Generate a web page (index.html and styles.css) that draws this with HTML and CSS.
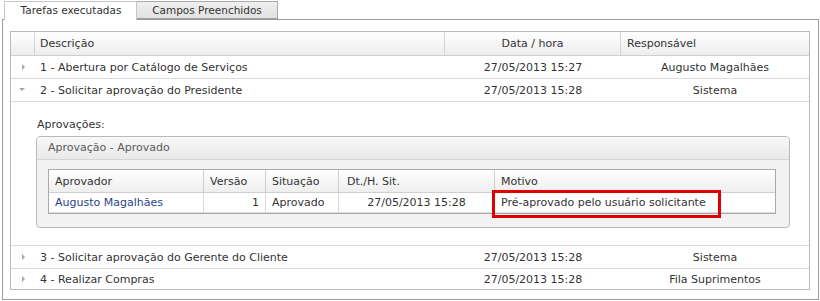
FILE: index.html
```html
<!DOCTYPE html>
<html lang="pt">
<head>
<meta charset="utf-8">
<link rel="stylesheet" href="styles.css">
</head>
<body>
<div class="tabs">
  <div class="tab tab-active">Tarefas executadas</div>
  <div class="tab tab-idle">Campos Preenchidos</div>
</div>
<div class="panel">
  <table class="grid">
    <thead>
      <tr>
        <th class="c-exp"></th>
        <th class="c-desc">Descrição</th>
        <th class="c-date">Data / hora</th>
        <th class="c-resp">Responsável</th>
      </tr>
    </thead>
    <tbody>
      <tr>
        <td class="c-exp"><span class="tri tri-right"></span></td>
        <td class="c-desc">1 - Abertura por Catálogo de Serviços</td>
        <td class="c-date">27/05/2013 15:27</td>
        <td class="c-resp">Augusto Magalhães</td>
      </tr>
      <tr>
        <td class="c-exp"><span class="tri tri-down"></span></td>
        <td class="c-desc">2 - Solicitar aprovação do Presidente</td>
        <td class="c-date">27/05/2013 15:28</td>
        <td class="c-resp">Sistema</td>
      </tr>
      <tr class="detail-row">
        <td colspan="4" class="detail">
          <div class="detail-label">Aprovações:</div>
          <div class="fieldset">
            <div class="fieldset-head">Aprovação - Aprovado</div>
            <div class="fieldset-body">
              <table class="sub">
                <thead>
                  <tr>
                    <th class="s-apr">Aprovador</th>
                    <th class="s-ver">Versão</th>
                    <th class="s-sit">Situação</th>
                    <th class="s-dt">Dt./H. Sit.</th>
                    <th class="s-mot">Motivo</th>
                  </tr>
                </thead>
                <tbody>
                  <tr>
                    <td class="s-apr"><a class="user-link" href="#">Augusto Magalhães</a></td>
                    <td class="s-ver num">1</td>
                    <td class="s-sit">Aprovado</td>
                    <td class="s-dt center">27/05/2013 15:28</td>
                    <td class="s-mot">Pré-aprovado pelo usuário solicitante<span class="highlight"></span></td>
                  </tr>
                </tbody>
              </table>
            </div>
          </div>
        </td>
      </tr>
      <tr>
        <td class="c-exp"><span class="tri tri-right"></span></td>
        <td class="c-desc">3 - Solicitar aprovação do Gerente do Cliente</td>
        <td class="c-date">27/05/2013 15:28</td>
        <td class="c-resp">Sistema</td>
      </tr>
      <tr class="last">
        <td class="c-exp"><span class="tri tri-right"></span></td>
        <td class="c-desc">4 - Realizar Compras</td>
        <td class="c-date">27/05/2013 15:28</td>
        <td class="c-resp">Fila Suprimentos</td>
      </tr>
    </tbody>
  </table>
</div>
</body>
</html>
```
FILE: styles.css
```css
* { box-sizing: border-box; }
html, body { margin: 0; padding: 0; background: #fff; }
body {
  font-family: "DejaVu Sans", Verdana, sans-serif;
  font-size: 11px;
  color: #333;
  width: 820px;
  height: 301px;
  overflow: hidden;
}

.tabs {
  display: flex;
  padding: 1px 0 0 4px;
  height: 19px;
  align-items: flex-start;
}
.tab {
  height: 18px;
  line-height: 17px;
  text-align: center;
  border: 1px solid #b4b4b4;
  border-bottom: none;
  font-size: 10.5px;
  color: #333;
}
.tab-active {
  width: 133px;
  height: 19px;
  background: #fff;
  border-color: #c8c8c8;
  position: relative;
  z-index: 1;
  padding-left: 1px;
}
.tab-idle {
  width: 141px;
  background: linear-gradient(#efefef, #e2e2e2);
  border-color: #a9a9a9;
  border-left: none;
  border-bottom: 1px solid #a0a0a0;
}

.panel {
  margin-left: 2px;
  width: 817px;
  height: 281px;
  border: 1px solid #9c9c9c;
  padding: 11px 8px 0 7px;
}

.grid {
  width: 800px;
  table-layout: fixed;
  border-collapse: separate;
  border-spacing: 0;
  border: 1px solid #b9b9b9;
}
.grid th, .grid td {
  padding: 0;
  white-space: nowrap;
  overflow: hidden;
}
.grid th {
  height: 24px;
  font-weight: normal;
  text-align: left;
  background: linear-gradient(#ffffff, #ededed);
  border-bottom: 1px solid #cfcfcf;
  border-right: 1px solid #d4d4d4;
}
.grid th.c-resp { border-right: none; }
.grid td {
  height: 23px;
  border-bottom: 1px solid #dcdcdc;
}
.grid tr.last td { border-bottom: none; height: 20px; }
.grid .c-exp { width: 24px; text-align: center; }
.grid .c-desc { width: 410px; padding-left: 5px; }
.grid .c-date { width: 176px; text-align: center; }
.grid th.c-resp { padding-left: 6px; }
.grid .c-resp { width: 188px; }
.grid td.c-resp { text-align: center; }

.tri {
  display: inline-block;
  width: 0;
  height: 0;
  vertical-align: middle;
  position: relative;
  top: -1px;
}
.tri-right {
  border-top: 3px solid transparent;
  border-bottom: 3px solid transparent;
  border-left: 3px solid #a6a6a6;
}
.tri-down {
  border-left: 3px solid transparent;
  border-right: 3px solid transparent;
  border-top: 3px solid #a6a6a6;
  margin-left: -2px;
}

.grid td.detail {
  height: 144px;
  padding: 16px 19px 0 25px;
  vertical-align: top;
}
.detail-label {
  height: 18px;
  line-height: 14px;
  padding-left: 1px;
}
.fieldset {
  border: 1px solid #bababa;
  border-radius: 4px;
  background: #f2f2f2;
  overflow: hidden;
  height: 92px;
}
.fieldset-head {
  height: 23px;
  line-height: 22px;
  padding-left: 11px;
  color: #5a5a5a;
  background: linear-gradient(#f8f8f8, #e9e9e9);
  border-bottom: 1px solid #d6d6d6;
}
.fieldset-body {
  padding: 9px 13px 0 11px;
}

.sub {
  width: 728px;
  table-layout: fixed;
  border-collapse: separate;
  border-spacing: 0;
  border: 1px solid #a9a9a9;
  background: #fff;
}
.sub th, .sub td {
  padding: 0 6px;
  white-space: nowrap;
  border-right: 1px solid #cfcfcf;
  text-align: left;
  font-weight: normal;
}
.sub th {
  height: 23px;
  background: linear-gradient(#ffffff, #eeeeee);
  border-bottom: 1px solid #cfcfcf;
}
.sub td {
  height: 20px;
  border-right-color: #dadada;
}
.sub .s-mot { border-right: none; }
.sub .s-apr { width: 155px; }
.sub .s-ver { width: 62px; }
.sub .s-sit { width: 73px; }
.sub .s-dt { width: 156px; }
.sub th.s-dt { padding-left: 8px; }
.sub .s-mot { width: 280px; }
.sub td.num { text-align: right; }
.sub td.center { text-align: center; }
.sub td.s-mot { position: relative; overflow: visible; }

.user-link {
  color: #24448a;
  text-decoration: none;
}

.highlight {
  position: absolute;
  left: -3px;
  top: -3px;
  width: 229px;
  height: 28px;
  border: 3px solid #e00000;
  pointer-events: none;
}
```
